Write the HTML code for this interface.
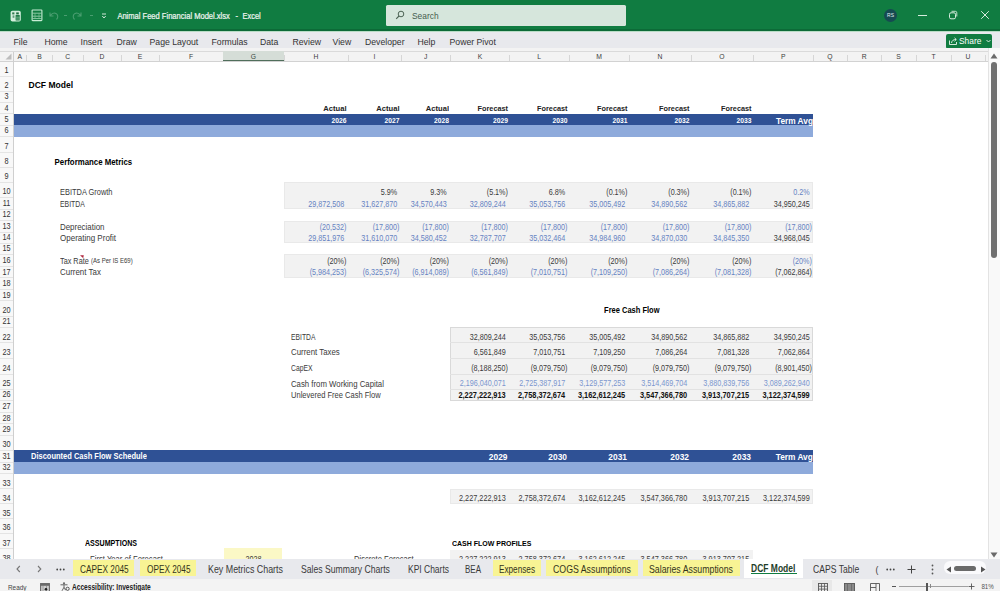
<!DOCTYPE html>
<html><head><meta charset="utf-8"><style>
*{margin:0;padding:0;box-sizing:border-box}
html,body{width:1000px;height:591px;overflow:hidden;background:#fff;font-family:"Liberation Sans", sans-serif}
.t{position:absolute;white-space:nowrap;line-height:12px;transform-origin:50% 50%}
.a{position:absolute}
</style></head><body>
<!-- title bar -->
<div class="a" style="left:0;top:0;width:1000px;height:31px;background:#107c41"></div>
<div class="a" style="left:0;top:29px;width:1000px;height:1.5px;background:#0c6a37"></div>
<svg class="a" style="left:10px;top:9.5px" width="12" height="12" viewBox="0 0 12 12">
 <rect x="0.6" y="0.8" width="10.2" height="10.8" rx="1.8" fill="#d4efdd"/>
 <rect x="2.2" y="2.4" width="2.2" height="2" fill="#2f7a4e"/>
 <rect x="6.2" y="2.4" width="2.6" height="2" fill="#1d6b3f"/>
 <rect x="2.6" y="5.4" width="1.8" height="2.4" fill="#5f9b78"/>
 <rect x="5.6" y="5" width="4.2" height="5.6" rx="0.6" fill="#1f7a47"/>
 <path d="M6 7.2H10M6 9H10" stroke="#9bd3b0" stroke-width="0.6"/>
</svg>
<svg class="a" style="left:30.5px;top:9.2px" width="12" height="12.5" viewBox="0 0 12 12.5">
 <rect x="1.1" y="1" width="9.8" height="10.6" rx="0.6" fill="none" stroke="#c8ecd5" stroke-width="1.1"/>
 <path d="M1.5 4.2H10.5M1.5 7.2H10.5M1.5 9.6H10.5" stroke="#a9dcbc" stroke-width="0.8"/>
 <path d="M4 4.2V7.2M8 4.2V7.2M4 7.2V9.6M8 7.2V9.6" stroke="#7fc49a" stroke-width="0.7"/>
</svg>
<svg class="a" style="left:47px;top:9px" width="60" height="13" viewBox="0 0 60 13">
 <path d="M3 3.5V7H6.5M3.3 6.8C4.5 4.5 7 3.5 9 4.5C11 5.5 11.5 8.5 9.5 10.5" fill="none" stroke="#4a9d70" stroke-width="1.1"/>
 <path d="M17 6.5H20" stroke="#4a9d70" stroke-width="1"/>
 <path d="M34 3.5V7H30.5M33.7 6.8C32.5 4.5 30 3.5 28 4.5C26 5.5 25.5 8.5 27.5 10.5" fill="none" stroke="#4a9d70" stroke-width="1.1"/>
 <path d="M43 6.5H46" stroke="#4a9d70" stroke-width="1"/>
 <path d="M55 5H59M55.3 7L57 9L58.7 7" fill="none" stroke="#cfe6d8" stroke-width="1"/>
</svg>
<div class="t" style="left:117.4px;top:11.2px;font-size:7.56px;color:#f0f7f2;-webkit-text-stroke:0.2px #e8f3ec;transform:scaleY(1.2)">Animal Feed Financial Model.xlsx</div>
<div class="t" style="left:235.5px;top:11.2px;font-size:7.5px;color:#f0f7f2;-webkit-text-stroke:0.2px #e8f3ec;transform:scaleY(1.2)">-</div>
<div class="t" style="left:242.6px;top:11.2px;font-size:7.4px;color:#f0f7f2;-webkit-text-stroke:0.2px #e8f3ec;transform:scaleY(1.2)">Excel</div>
<div class="a" style="left:385.5px;top:5px;width:240px;height:20.5px;background:#d6e6dc;border-radius:1.5px"></div>
<svg class="a" style="left:395px;top:10px" width="10" height="10" viewBox="0 0 10 10">
 <circle cx="6" cy="4" r="2.8" fill="none" stroke="#4d6354" stroke-width="1"/>
 <path d="M4 6L1.2 8.8" stroke="#4d6354" stroke-width="1.1"/>
</svg>
<div class="t" style="left:412px;top:9.5px;font-size:8.4px;color:#455d4e;transform:scaleY(1.12)">Search</div>
<div class="a" style="left:883.5px;top:8.5px;width:13.5px;height:13.5px;border-radius:50%;background:#164a52"></div>
<div class="t" style="left:884.5px;width:12px;text-align:center;top:9.3px;font-size:5px;color:#e0eef0">RS</div>
<div class="a" style="left:917.5px;top:14.6px;width:9px;height:1.1px;background:#d6ecdd"></div>
<svg class="a" style="left:948px;top:10px" width="10" height="10" viewBox="0 0 10 10">
 <rect x="1.5" y="2.8" width="6" height="6" rx="1.5" fill="none" stroke="#d6ecdd" stroke-width="1"/>
 <path d="M3.5 1.3H7.3Q8.8 1.3 8.8 2.8V6.5" fill="none" stroke="#d6ecdd" stroke-width="0.9"/>
</svg>
<svg class="a" style="left:980px;top:10px" width="10" height="10" viewBox="0 0 10 10">
 <path d="M1.2 1.2L8.8 8.8M8.8 1.2L1.2 8.8" stroke="#d6ecdd" stroke-width="1"/>
</svg>

<!-- ribbon tabs -->
<div class="a" style="left:0;top:31px;width:1000px;height:17px;background:#e8e9ed"></div>
<div class="a" style="left:0;top:30.5px;width:1000px;height:1px;background:#b9dcc6"></div>
<div class="t" style="left:13.5px;top:35.8px;font-size:8.7px;color:#333;transform:scaleY(1.12)">File</div>
<div class="t" style="left:44.5px;top:35.8px;font-size:8.7px;color:#333;transform:scaleY(1.12)">Home</div>
<div class="t" style="left:80.5px;top:35.8px;font-size:8.7px;color:#333;transform:scaleY(1.12)">Insert</div>
<div class="t" style="left:116.5px;top:35.8px;font-size:8.7px;color:#333;transform:scaleY(1.12)">Draw</div>
<div class="t" style="left:149.5px;top:35.8px;font-size:8.7px;color:#333;transform:scaleY(1.12)">Page Layout</div>
<div class="t" style="left:211.5px;top:35.8px;font-size:8.7px;color:#333;transform:scaleY(1.12)">Formulas</div>
<div class="t" style="left:260px;top:35.8px;font-size:8.7px;color:#333;transform:scaleY(1.12)">Data</div>
<div class="t" style="left:292.5px;top:35.8px;font-size:8.7px;color:#333;transform:scaleY(1.12)">Review</div>
<div class="t" style="left:332.5px;top:35.8px;font-size:8.7px;color:#333;transform:scaleY(1.12)">View</div>
<div class="t" style="left:365px;top:35.8px;font-size:8.7px;color:#333;transform:scaleY(1.12)">Developer</div>
<div class="t" style="left:417.5px;top:35.8px;font-size:8.7px;color:#333;transform:scaleY(1.12)">Help</div>
<div class="t" style="left:449.5px;top:35.8px;font-size:8.7px;color:#333;transform:scaleY(1.12)">Power Pivot</div>
<div class="a" style="left:946px;top:33.6px;width:46.3px;height:15.2px;background:#107c41;border-radius:2px"></div>
<svg class="a" style="left:948px;top:36px" width="10" height="10" viewBox="0 0 10 10">
 <path d="M1.5 4.5V8.5H8.5V6" fill="none" stroke="#e8f5ec" stroke-width="0.9"/>
 <path d="M3.5 7C3.8 4.5 5.5 3.5 8 3.5M6.5 1.8L8.3 3.5L6.5 5.2" fill="none" stroke="#e8f5ec" stroke-width="0.9"/>
</svg>
<div class="t" style="left:959px;top:34.8px;font-size:8.4px;color:#fff;transform:scaleY(1.12)">Share</div>
<svg class="a" style="left:985.5px;top:39px" width="5" height="4" viewBox="0 0 5 4"><path d="M0.5 1L2.5 3L4.5 1" fill="none" stroke="#e8f5ec" stroke-width="0.9"/></svg>

<!-- column header -->
<div class="a" style="left:0;top:48px;width:988px;height:14px;background:#f3f3f3"></div>
<div class="a" style="left:0;top:51.2px;width:988px;height:1px;background:#dadada"></div>
<div class="a" style="left:0;top:60.7px;width:988px;height:1px;background:#d2d2d2"></div>
<div style="position:absolute;left:13.00px;top:50.7px;width:13.50px;height:10.3px;background:transparent"></div>
<div style="position:absolute;left:26.00px;top:55px;width:1px;height:6px;background:#d6d6d6"></div>
<div class="t" style="left:13.00px;width:13.50px;text-align:center;top:50.8px;font-size:6.8px;color:#3c3c3c;transform:scaleY(1.12)">A</div>
<div style="position:absolute;left:26.50px;top:50.7px;width:26.00px;height:10.3px;background:transparent"></div>
<div style="position:absolute;left:52.00px;top:55px;width:1px;height:6px;background:#d6d6d6"></div>
<div class="t" style="left:26.50px;width:26.00px;text-align:center;top:50.8px;font-size:6.8px;color:#3c3c3c;transform:scaleY(1.12)">B</div>
<div style="position:absolute;left:52.50px;top:50.7px;width:30.50px;height:10.3px;background:transparent"></div>
<div style="position:absolute;left:82.50px;top:55px;width:1px;height:6px;background:#d6d6d6"></div>
<div class="t" style="left:52.50px;width:30.50px;text-align:center;top:50.8px;font-size:6.8px;color:#3c3c3c;transform:scaleY(1.12)">C</div>
<div style="position:absolute;left:83.00px;top:50.7px;width:38.00px;height:10.3px;background:transparent"></div>
<div style="position:absolute;left:120.50px;top:55px;width:1px;height:6px;background:#d6d6d6"></div>
<div class="t" style="left:83.00px;width:38.00px;text-align:center;top:50.8px;font-size:6.8px;color:#3c3c3c;transform:scaleY(1.12)">D</div>
<div style="position:absolute;left:121.00px;top:50.7px;width:38.00px;height:10.3px;background:transparent"></div>
<div style="position:absolute;left:158.50px;top:55px;width:1px;height:6px;background:#d6d6d6"></div>
<div class="t" style="left:121.00px;width:38.00px;text-align:center;top:50.8px;font-size:6.8px;color:#3c3c3c;transform:scaleY(1.12)">E</div>
<div style="position:absolute;left:159.00px;top:50.7px;width:64.00px;height:10.3px;background:transparent"></div>
<div style="position:absolute;left:222.50px;top:55px;width:1px;height:6px;background:#d6d6d6"></div>
<div class="t" style="left:159.00px;width:64.00px;text-align:center;top:50.8px;font-size:6.8px;color:#3c3c3c;transform:scaleY(1.12)">F</div>
<div style="position:absolute;left:223.00px;top:50.7px;width:61.00px;height:10.3px;background:#d5ddd7"></div>
<div style="position:absolute;left:283.50px;top:55px;width:1px;height:6px;background:#d6d6d6"></div>
<div class="t" style="left:223.00px;width:61.00px;text-align:center;top:50.8px;font-size:6.8px;color:#3a4a40;transform:scaleY(1.12)">G</div>
<div style="position:absolute;left:284.00px;top:50.7px;width:64.00px;height:10.3px;background:transparent"></div>
<div style="position:absolute;left:347.50px;top:55px;width:1px;height:6px;background:#d6d6d6"></div>
<div class="t" style="left:284.00px;width:64.00px;text-align:center;top:50.8px;font-size:6.8px;color:#3c3c3c;transform:scaleY(1.12)">H</div>
<div style="position:absolute;left:348.00px;top:50.7px;width:53.00px;height:10.3px;background:transparent"></div>
<div style="position:absolute;left:400.50px;top:55px;width:1px;height:6px;background:#d6d6d6"></div>
<div class="t" style="left:348.00px;width:53.00px;text-align:center;top:50.8px;font-size:6.8px;color:#3c3c3c;transform:scaleY(1.12)">I</div>
<div style="position:absolute;left:401.00px;top:50.7px;width:49.50px;height:10.3px;background:transparent"></div>
<div style="position:absolute;left:450.00px;top:55px;width:1px;height:6px;background:#d6d6d6"></div>
<div class="t" style="left:401.00px;width:49.50px;text-align:center;top:50.8px;font-size:6.8px;color:#3c3c3c;transform:scaleY(1.12)">J</div>
<div style="position:absolute;left:450.50px;top:50.7px;width:59.00px;height:10.3px;background:transparent"></div>
<div style="position:absolute;left:509.00px;top:55px;width:1px;height:6px;background:#d6d6d6"></div>
<div class="t" style="left:450.50px;width:59.00px;text-align:center;top:50.8px;font-size:6.8px;color:#3c3c3c;transform:scaleY(1.12)">K</div>
<div style="position:absolute;left:509.50px;top:50.7px;width:59.50px;height:10.3px;background:transparent"></div>
<div style="position:absolute;left:568.50px;top:55px;width:1px;height:6px;background:#d6d6d6"></div>
<div class="t" style="left:509.50px;width:59.50px;text-align:center;top:50.8px;font-size:6.8px;color:#3c3c3c;transform:scaleY(1.12)">L</div>
<div style="position:absolute;left:569.00px;top:50.7px;width:60.00px;height:10.3px;background:transparent"></div>
<div style="position:absolute;left:628.50px;top:55px;width:1px;height:6px;background:#d6d6d6"></div>
<div class="t" style="left:569.00px;width:60.00px;text-align:center;top:50.8px;font-size:6.8px;color:#3c3c3c;transform:scaleY(1.12)">M</div>
<div style="position:absolute;left:629.00px;top:50.7px;width:62.00px;height:10.3px;background:transparent"></div>
<div style="position:absolute;left:690.50px;top:55px;width:1px;height:6px;background:#d6d6d6"></div>
<div class="t" style="left:629.00px;width:62.00px;text-align:center;top:50.8px;font-size:6.8px;color:#3c3c3c;transform:scaleY(1.12)">N</div>
<div style="position:absolute;left:691.00px;top:50.7px;width:62.00px;height:10.3px;background:transparent"></div>
<div style="position:absolute;left:752.50px;top:55px;width:1px;height:6px;background:#d6d6d6"></div>
<div class="t" style="left:691.00px;width:62.00px;text-align:center;top:50.8px;font-size:6.8px;color:#3c3c3c;transform:scaleY(1.12)">O</div>
<div style="position:absolute;left:753.00px;top:50.7px;width:60.50px;height:10.3px;background:transparent"></div>
<div style="position:absolute;left:813.00px;top:55px;width:1px;height:6px;background:#d6d6d6"></div>
<div class="t" style="left:753.00px;width:60.50px;text-align:center;top:50.8px;font-size:6.8px;color:#3c3c3c;transform:scaleY(1.12)">P</div>
<div style="position:absolute;left:812.50px;top:50.7px;width:35.00px;height:10.3px;background:transparent"></div>
<div style="position:absolute;left:847.00px;top:55px;width:1px;height:6px;background:#d6d6d6"></div>
<div class="t" style="left:812.50px;width:35.00px;text-align:center;top:50.8px;font-size:6.8px;color:#3c3c3c;transform:scaleY(1.12)">Q</div>
<div style="position:absolute;left:847.50px;top:50.7px;width:33.50px;height:10.3px;background:transparent"></div>
<div style="position:absolute;left:880.50px;top:55px;width:1px;height:6px;background:#d6d6d6"></div>
<div class="t" style="left:847.50px;width:33.50px;text-align:center;top:50.8px;font-size:6.8px;color:#3c3c3c;transform:scaleY(1.12)">R</div>
<div style="position:absolute;left:881.00px;top:50.7px;width:35.00px;height:10.3px;background:transparent"></div>
<div style="position:absolute;left:915.50px;top:55px;width:1px;height:6px;background:#d6d6d6"></div>
<div class="t" style="left:881.00px;width:35.00px;text-align:center;top:50.8px;font-size:6.8px;color:#3c3c3c;transform:scaleY(1.12)">S</div>
<div style="position:absolute;left:916.00px;top:50.7px;width:35.00px;height:10.3px;background:transparent"></div>
<div style="position:absolute;left:950.50px;top:55px;width:1px;height:6px;background:#d6d6d6"></div>
<div class="t" style="left:916.00px;width:35.00px;text-align:center;top:50.8px;font-size:6.8px;color:#3c3c3c;transform:scaleY(1.12)">T</div>
<div style="position:absolute;left:951.00px;top:50.7px;width:34.00px;height:10.3px;background:transparent"></div>
<div style="position:absolute;left:984.50px;top:55px;width:1px;height:6px;background:#d6d6d6"></div>
<div class="t" style="left:951.00px;width:34.00px;text-align:center;top:50.8px;font-size:6.8px;color:#3c3c3c;transform:scaleY(1.12)">U</div>
<div style="position:absolute;left:223px;top:60px;width:61px;height:1.3px;background:#506e5b"></div>
<svg class="a" style="left:5px;top:53px" width="7" height="7" viewBox="0 0 7 7"><path d="M6.5 0.5V6.5H0.5Z" fill="#bdbdbd"/></svg>

<!-- row header -->
<div class="a" style="left:0;top:61.6px;width:13px;height:498px;background:#f8f8f8"></div>
<div class="a" style="left:12.8px;top:52px;width:1px;height:507px;background:#cfcfcf"></div>
<div style="position:absolute;left:0;top:75.80px;width:13px;height:1px;background:#e4e4e4"></div>
<div class="t" style="left:0;width:13px;text-align:center;top:65.10px;font-size:7.3px;color:#333;transform:scaleY(1.2)">1</div>
<div style="position:absolute;left:0;top:90.50px;width:13px;height:1px;background:#e4e4e4"></div>
<div class="t" style="left:0;width:13px;text-align:center;top:79.80px;font-size:7.3px;color:#333;transform:scaleY(1.2)">2</div>
<div style="position:absolute;left:0;top:101.70px;width:13px;height:1px;background:#e4e4e4"></div>
<div class="t" style="left:0;width:13px;text-align:center;top:91.00px;font-size:7.3px;color:#333;transform:scaleY(1.2)">3</div>
<div style="position:absolute;left:0;top:113.30px;width:13px;height:1px;background:#e4e4e4"></div>
<div class="t" style="left:0;width:13px;text-align:center;top:102.60px;font-size:7.3px;color:#333;transform:scaleY(1.2)">4</div>
<div style="position:absolute;left:0;top:124.50px;width:13px;height:1px;background:#e4e4e4"></div>
<div class="t" style="left:0;width:13px;text-align:center;top:113.80px;font-size:7.3px;color:#333;transform:scaleY(1.2)">5</div>
<div style="position:absolute;left:0;top:136.10px;width:13px;height:1px;background:#e4e4e4"></div>
<div class="t" style="left:0;width:13px;text-align:center;top:125.40px;font-size:7.3px;color:#333;transform:scaleY(1.2)">6</div>
<div style="position:absolute;left:0;top:151.60px;width:13px;height:1px;background:#e4e4e4"></div>
<div class="t" style="left:0;width:13px;text-align:center;top:140.90px;font-size:7.3px;color:#333;transform:scaleY(1.2)">7</div>
<div style="position:absolute;left:0;top:166.90px;width:13px;height:1px;background:#e4e4e4"></div>
<div class="t" style="left:0;width:13px;text-align:center;top:156.20px;font-size:7.3px;color:#333;transform:scaleY(1.2)">8</div>
<div style="position:absolute;left:0;top:181.70px;width:13px;height:1px;background:#e4e4e4"></div>
<div class="t" style="left:0;width:13px;text-align:center;top:171.00px;font-size:7.3px;color:#333;transform:scaleY(1.2)">9</div>
<div style="position:absolute;left:0;top:196.80px;width:13px;height:1px;background:#e4e4e4"></div>
<div class="t" style="left:0;width:13px;text-align:center;top:186.10px;font-size:7.3px;color:#333;transform:scaleY(1.2)">10</div>
<div style="position:absolute;left:0;top:208.50px;width:13px;height:1px;background:#e4e4e4"></div>
<div class="t" style="left:0;width:13px;text-align:center;top:197.80px;font-size:7.3px;color:#333;transform:scaleY(1.2)">11</div>
<div style="position:absolute;left:0;top:220.10px;width:13px;height:1px;background:#e4e4e4"></div>
<div class="t" style="left:0;width:13px;text-align:center;top:209.40px;font-size:7.3px;color:#333;transform:scaleY(1.2)">12</div>
<div style="position:absolute;left:0;top:231.50px;width:13px;height:1px;background:#e4e4e4"></div>
<div class="t" style="left:0;width:13px;text-align:center;top:220.80px;font-size:7.3px;color:#333;transform:scaleY(1.2)">13</div>
<div style="position:absolute;left:0;top:242.50px;width:13px;height:1px;background:#e4e4e4"></div>
<div class="t" style="left:0;width:13px;text-align:center;top:231.80px;font-size:7.3px;color:#333;transform:scaleY(1.2)">14</div>
<div style="position:absolute;left:0;top:253.90px;width:13px;height:1px;background:#e4e4e4"></div>
<div class="t" style="left:0;width:13px;text-align:center;top:243.20px;font-size:7.3px;color:#333;transform:scaleY(1.2)">15</div>
<div style="position:absolute;left:0;top:265.50px;width:13px;height:1px;background:#e4e4e4"></div>
<div class="t" style="left:0;width:13px;text-align:center;top:254.80px;font-size:7.3px;color:#333;transform:scaleY(1.2)">16</div>
<div style="position:absolute;left:0;top:277.20px;width:13px;height:1px;background:#e4e4e4"></div>
<div class="t" style="left:0;width:13px;text-align:center;top:266.50px;font-size:7.3px;color:#333;transform:scaleY(1.2)">17</div>
<div style="position:absolute;left:0;top:288.60px;width:13px;height:1px;background:#e4e4e4"></div>
<div class="t" style="left:0;width:13px;text-align:center;top:277.90px;font-size:7.3px;color:#333;transform:scaleY(1.2)">18</div>
<div style="position:absolute;left:0;top:300.30px;width:13px;height:1px;background:#e4e4e4"></div>
<div class="t" style="left:0;width:13px;text-align:center;top:289.60px;font-size:7.3px;color:#333;transform:scaleY(1.2)">19</div>
<div style="position:absolute;left:0;top:315.50px;width:13px;height:1px;background:#e4e4e4"></div>
<div class="t" style="left:0;width:13px;text-align:center;top:304.80px;font-size:7.3px;color:#333;transform:scaleY(1.2)">20</div>
<div style="position:absolute;left:0;top:327.10px;width:13px;height:1px;background:#e4e4e4"></div>
<div class="t" style="left:0;width:13px;text-align:center;top:316.40px;font-size:7.3px;color:#333;transform:scaleY(1.2)">21</div>
<div style="position:absolute;left:0;top:342.40px;width:13px;height:1px;background:#e4e4e4"></div>
<div class="t" style="left:0;width:13px;text-align:center;top:331.70px;font-size:7.3px;color:#333;transform:scaleY(1.2)">22</div>
<div style="position:absolute;left:0;top:357.50px;width:13px;height:1px;background:#e4e4e4"></div>
<div class="t" style="left:0;width:13px;text-align:center;top:346.80px;font-size:7.3px;color:#333;transform:scaleY(1.2)">23</div>
<div style="position:absolute;left:0;top:373.50px;width:13px;height:1px;background:#e4e4e4"></div>
<div class="t" style="left:0;width:13px;text-align:center;top:362.80px;font-size:7.3px;color:#333;transform:scaleY(1.2)">24</div>
<div style="position:absolute;left:0;top:388.70px;width:13px;height:1px;background:#e4e4e4"></div>
<div class="t" style="left:0;width:13px;text-align:center;top:378.00px;font-size:7.3px;color:#333;transform:scaleY(1.2)">25</div>
<div style="position:absolute;left:0;top:400.00px;width:13px;height:1px;background:#e4e4e4"></div>
<div class="t" style="left:0;width:13px;text-align:center;top:389.30px;font-size:7.3px;color:#333;transform:scaleY(1.2)">26</div>
<div style="position:absolute;left:0;top:411.50px;width:13px;height:1px;background:#e4e4e4"></div>
<div class="t" style="left:0;width:13px;text-align:center;top:400.80px;font-size:7.3px;color:#333;transform:scaleY(1.2)">27</div>
<div style="position:absolute;left:0;top:423.20px;width:13px;height:1px;background:#e4e4e4"></div>
<div class="t" style="left:0;width:13px;text-align:center;top:412.50px;font-size:7.3px;color:#333;transform:scaleY(1.2)">28</div>
<div style="position:absolute;left:0;top:434.50px;width:13px;height:1px;background:#e4e4e4"></div>
<div class="t" style="left:0;width:13px;text-align:center;top:423.80px;font-size:7.3px;color:#333;transform:scaleY(1.2)">29</div>
<div style="position:absolute;left:0;top:449.70px;width:13px;height:1px;background:#e4e4e4"></div>
<div class="t" style="left:0;width:13px;text-align:center;top:439.00px;font-size:7.3px;color:#333;transform:scaleY(1.2)">30</div>
<div style="position:absolute;left:0;top:461.50px;width:13px;height:1px;background:#e4e4e4"></div>
<div class="t" style="left:0;width:13px;text-align:center;top:450.80px;font-size:7.3px;color:#333;transform:scaleY(1.2)">31</div>
<div style="position:absolute;left:0;top:473.10px;width:13px;height:1px;background:#e4e4e4"></div>
<div class="t" style="left:0;width:13px;text-align:center;top:462.40px;font-size:7.3px;color:#333;transform:scaleY(1.2)">32</div>
<div style="position:absolute;left:0;top:488.20px;width:13px;height:1px;background:#e4e4e4"></div>
<div class="t" style="left:0;width:13px;text-align:center;top:477.50px;font-size:7.3px;color:#333;transform:scaleY(1.2)">33</div>
<div style="position:absolute;left:0;top:503.30px;width:13px;height:1px;background:#e4e4e4"></div>
<div class="t" style="left:0;width:13px;text-align:center;top:492.60px;font-size:7.3px;color:#333;transform:scaleY(1.2)">34</div>
<div style="position:absolute;left:0;top:518.20px;width:13px;height:1px;background:#e4e4e4"></div>
<div class="t" style="left:0;width:13px;text-align:center;top:507.50px;font-size:7.3px;color:#333;transform:scaleY(1.2)">35</div>
<div style="position:absolute;left:0;top:533.00px;width:13px;height:1px;background:#e4e4e4"></div>
<div class="t" style="left:0;width:13px;text-align:center;top:522.30px;font-size:7.3px;color:#333;transform:scaleY(1.2)">36</div>
<div style="position:absolute;left:0;top:548.30px;width:13px;height:1px;background:#e4e4e4"></div>
<div class="t" style="left:0;width:13px;text-align:center;top:537.60px;font-size:7.3px;color:#333;transform:scaleY(1.2)">37</div>
<div style="position:absolute;left:0;top:563.50px;width:13px;height:1px;background:#e4e4e4"></div>
<div class="t" style="left:0;width:13px;text-align:center;top:552.80px;font-size:7.3px;color:#333;transform:scaleY(1.2)">38</div>

<!-- grid -->
<div class="a" style="left:13.5px;top:61.7px;width:974px;height:497.3px;background:#fff"></div>
<div style="position:absolute;left:13.50px;top:113.80px;width:799.70px;height:11.20px;background:#2f5195"></div>
<div style="position:absolute;left:13.50px;top:125.00px;width:799.70px;height:11.60px;background:#8eaadb"></div>
<div style="position:absolute;left:13.50px;top:450.20px;width:799.70px;height:11.80px;background:#2f5195"></div>
<div style="position:absolute;left:13.50px;top:462.00px;width:799.70px;height:11.60px;background:#8eaadb"></div>
<div style="position:absolute;left:283.50px;top:182.20px;width:529.80px;height:26.80px;background:#f2f2f2;border:1px solid #e9e9e9"></div>
<div style="position:absolute;left:283.50px;top:220.60px;width:529.80px;height:22.40px;background:#f2f2f2;border:1px solid #e9e9e9"></div>
<div style="position:absolute;left:283.50px;top:254.40px;width:529.80px;height:23.30px;background:#f2f2f2;border:1px solid #e9e9e9"></div>
<div style="position:absolute;left:449.50px;top:327.00px;width:363.50px;height:73.50px;background:#f2f2f2;border:1px solid #d9d9d9;box-sizing:border-box"></div>
<div style="position:absolute;left:449.50px;top:342.40px;width:363.50px;height:1.00px;background:#e2e2e2"></div>
<div style="position:absolute;left:449.50px;top:357.50px;width:363.50px;height:1.00px;background:#e2e2e2"></div>
<div style="position:absolute;left:449.50px;top:373.50px;width:363.50px;height:1.00px;background:#e2e2e2"></div>
<div style="position:absolute;left:449.50px;top:388.70px;width:363.50px;height:1.00px;background:#e2e2e2"></div>
<div style="position:absolute;left:284.00px;top:488.70px;width:528.50px;height:15.10px;"></div>
<div style="position:absolute;left:449.50px;top:488.70px;width:363.80px;height:15.10px;background:#f2f2f2;border:1px solid #e9e9e9"></div>
<div style="position:absolute;left:449.80px;top:549.80px;width:302.90px;height:15.20px;background:#f2f2f2"></div>
<div style="position:absolute;left:223.80px;top:547.60px;width:58.40px;height:17.40px;background:#fbf8c6"></div>
<div class="t" style="left:28.50px;top:79.20px;font-size:8.55px;font-weight:700;color:#000;transform:scale(1.0000,1.15);transform-origin:0 50%;">DCF Model</div>
<div class="t" style="right:653.50px;top:103.40px;font-size:7.6px;font-weight:700;color:#222;transform:scale(1.0000,1.05);transform-origin:100% 50%;">Actual</div>
<div class="t" style="right:600.50px;top:103.40px;font-size:7.6px;font-weight:700;color:#222;transform:scale(1.0000,1.05);transform-origin:100% 50%;">Actual</div>
<div class="t" style="right:551.00px;top:103.40px;font-size:7.6px;font-weight:700;color:#222;transform:scale(1.0000,1.05);transform-origin:100% 50%;">Actual</div>
<div class="t" style="right:492.00px;top:103.40px;font-size:7.3px;font-weight:700;color:#222;transform:scale(1.0000,1.05);transform-origin:100% 50%;">Forecast</div>
<div class="t" style="right:432.50px;top:103.40px;font-size:7.3px;font-weight:700;color:#222;transform:scale(1.0000,1.05);transform-origin:100% 50%;">Forecast</div>
<div class="t" style="right:372.50px;top:103.40px;font-size:7.3px;font-weight:700;color:#222;transform:scale(1.0000,1.05);transform-origin:100% 50%;">Forecast</div>
<div class="t" style="right:310.50px;top:103.40px;font-size:7.3px;font-weight:700;color:#222;transform:scale(1.0000,1.05);transform-origin:100% 50%;">Forecast</div>
<div class="t" style="right:248.50px;top:103.40px;font-size:7.3px;font-weight:700;color:#222;transform:scale(1.0000,1.05);transform-origin:100% 50%;">Forecast</div>
<div class="t" style="right:653.50px;top:115.20px;font-size:6.7px;font-weight:700;color:#fff;transform:scale(1.0000,1.15);transform-origin:100% 50%;">2026</div>
<div class="t" style="right:600.50px;top:115.20px;font-size:6.7px;font-weight:700;color:#fff;transform:scale(1.0000,1.15);transform-origin:100% 50%;">2027</div>
<div class="t" style="right:551.00px;top:115.20px;font-size:6.7px;font-weight:700;color:#fff;transform:scale(1.0000,1.15);transform-origin:100% 50%;">2028</div>
<div class="t" style="right:492.00px;top:115.20px;font-size:6.7px;font-weight:700;color:#fff;transform:scale(1.0000,1.15);transform-origin:100% 50%;">2029</div>
<div class="t" style="right:432.50px;top:115.20px;font-size:6.7px;font-weight:700;color:#fff;transform:scale(1.0000,1.15);transform-origin:100% 50%;">2030</div>
<div class="t" style="right:372.50px;top:115.20px;font-size:6.7px;font-weight:700;color:#fff;transform:scale(1.0000,1.15);transform-origin:100% 50%;">2031</div>
<div class="t" style="right:310.50px;top:115.20px;font-size:6.7px;font-weight:700;color:#fff;transform:scale(1.0000,1.15);transform-origin:100% 50%;">2032</div>
<div class="t" style="right:248.50px;top:115.20px;font-size:6.7px;font-weight:700;color:#fff;transform:scale(1.0000,1.15);transform-origin:100% 50%;">2033</div>
<div class="t" style="right:187.00px;top:114.60px;font-size:8.3px;font-weight:700;color:#fff;transform:scale(1.0000,1.15);transform-origin:100% 50%;">Term Avg</div>
<div class="t" style="left:54.60px;top:156.50px;font-size:7.85px;font-weight:700;color:#000;transform:scale(1.0000,1.15);transform-origin:0 50%;">Performance Metrics</div>
<div class="t" style="left:59.50px;top:186.90px;font-size:7.6px;font-weight:400;color:#3a3a3a;transform:scale(0.9788,1.15);transform-origin:0 50%;">EBITDA Growth</div>
<div class="t" style="left:59.50px;top:198.60px;font-size:7.6px;font-weight:400;color:#3a3a3a;transform:scale(0.9035,1.15);transform-origin:0 50%;">EBITDA</div>
<div class="t" style="left:59.50px;top:221.60px;font-size:7.6px;font-weight:400;color:#3a3a3a;transform:scale(1.0429,1.15);transform-origin:0 50%;">Depreciation</div>
<div class="t" style="left:59.50px;top:232.60px;font-size:7.6px;font-weight:400;color:#3a3a3a;transform:scale(1.0540,1.15);transform-origin:0 50%;">Operating Profit</div>
<div class="t" style="left:59.50px;top:267.30px;font-size:7.6px;font-weight:400;color:#3a3a3a;transform:scale(1.0449,1.15);transform-origin:0 50%;">Current Tax</div>
<div class="t" style="left:59.80px;top:255.60px;font-size:7.6px;font-weight:400;color:#3a3a3a;transform:scale(0.9603,1.15);transform-origin:0 50%;">Tax Rate</div>
<div class="t" style="left:91.10px;top:255.40px;font-size:6.5px;font-weight:400;color:#3a3a3a;transform:scale(0.9235,1.15);transform-origin:0 50%;">(As Per IS E69)</div>
<div class="t" style="right:602.80px;top:186.90px;font-size:7.2px;font-weight:400;color:#3a3a3a;transform:scale(1.0000,1.15);transform-origin:100% 50%;">5.9%</div>
<div class="t" style="right:553.30px;top:186.90px;font-size:7.2px;font-weight:400;color:#3a3a3a;transform:scale(1.0000,1.15);transform-origin:100% 50%;">9.3%</div>
<div class="t" style="right:492.10px;top:186.90px;font-size:7.2px;font-weight:400;color:#3a3a3a;transform:scale(1.0000,1.15);transform-origin:100% 50%;">(5.1%)</div>
<div class="t" style="right:434.80px;top:186.90px;font-size:7.2px;font-weight:400;color:#3a3a3a;transform:scale(1.0000,1.15);transform-origin:100% 50%;">6.8%</div>
<div class="t" style="right:372.60px;top:186.90px;font-size:7.2px;font-weight:400;color:#3a3a3a;transform:scale(1.0000,1.15);transform-origin:100% 50%;">(0.1%)</div>
<div class="t" style="right:310.60px;top:186.90px;font-size:7.2px;font-weight:400;color:#3a3a3a;transform:scale(1.0000,1.15);transform-origin:100% 50%;">(0.3%)</div>
<div class="t" style="right:248.60px;top:186.90px;font-size:7.2px;font-weight:400;color:#3a3a3a;transform:scale(1.0000,1.15);transform-origin:100% 50%;">(0.1%)</div>
<div class="t" style="right:190.30px;top:186.90px;font-size:7.2px;font-weight:400;color:#6682c2;transform:scale(1.0000,1.15);transform-origin:100% 50%;">0.2%</div>
<div class="t" style="right:655.80px;top:198.60px;font-size:7.2px;font-weight:400;color:#6682c2;transform:scale(1.0000,1.15);transform-origin:100% 50%;">29,872,508</div>
<div class="t" style="right:602.80px;top:198.60px;font-size:7.2px;font-weight:400;color:#6682c2;transform:scale(1.0000,1.15);transform-origin:100% 50%;">31,627,870</div>
<div class="t" style="right:553.30px;top:198.60px;font-size:7.2px;font-weight:400;color:#6682c2;transform:scale(1.0000,1.15);transform-origin:100% 50%;">34,570,443</div>
<div class="t" style="right:494.30px;top:198.60px;font-size:7.2px;font-weight:400;color:#6682c2;transform:scale(1.0000,1.15);transform-origin:100% 50%;">32,809,244</div>
<div class="t" style="right:434.80px;top:198.60px;font-size:7.2px;font-weight:400;color:#6682c2;transform:scale(1.0000,1.15);transform-origin:100% 50%;">35,053,756</div>
<div class="t" style="right:374.80px;top:198.60px;font-size:7.2px;font-weight:400;color:#6682c2;transform:scale(1.0000,1.15);transform-origin:100% 50%;">35,005,492</div>
<div class="t" style="right:312.80px;top:198.60px;font-size:7.2px;font-weight:400;color:#6682c2;transform:scale(1.0000,1.15);transform-origin:100% 50%;">34,890,562</div>
<div class="t" style="right:250.80px;top:198.60px;font-size:7.2px;font-weight:400;color:#6682c2;transform:scale(1.0000,1.15);transform-origin:100% 50%;">34,865,882</div>
<div class="t" style="right:190.30px;top:198.60px;font-size:7.2px;font-weight:400;color:#3a3a3a;transform:scale(1.0000,1.15);transform-origin:100% 50%;">34,950,245</div>
<div class="t" style="right:653.60px;top:221.60px;font-size:7.2px;font-weight:400;color:#6682c2;transform:scale(1.0000,1.15);transform-origin:100% 50%;">(20,532)</div>
<div class="t" style="right:600.60px;top:221.60px;font-size:7.2px;font-weight:400;color:#6682c2;transform:scale(1.0000,1.15);transform-origin:100% 50%;">(17,800)</div>
<div class="t" style="right:551.10px;top:221.60px;font-size:7.2px;font-weight:400;color:#6682c2;transform:scale(1.0000,1.15);transform-origin:100% 50%;">(17,800)</div>
<div class="t" style="right:492.10px;top:221.60px;font-size:7.2px;font-weight:400;color:#6682c2;transform:scale(1.0000,1.15);transform-origin:100% 50%;">(17,800)</div>
<div class="t" style="right:432.60px;top:221.60px;font-size:7.2px;font-weight:400;color:#6682c2;transform:scale(1.0000,1.15);transform-origin:100% 50%;">(17,800)</div>
<div class="t" style="right:372.60px;top:221.60px;font-size:7.2px;font-weight:400;color:#6682c2;transform:scale(1.0000,1.15);transform-origin:100% 50%;">(17,800)</div>
<div class="t" style="right:310.60px;top:221.60px;font-size:7.2px;font-weight:400;color:#6682c2;transform:scale(1.0000,1.15);transform-origin:100% 50%;">(17,800)</div>
<div class="t" style="right:248.60px;top:221.60px;font-size:7.2px;font-weight:400;color:#6682c2;transform:scale(1.0000,1.15);transform-origin:100% 50%;">(17,800)</div>
<div class="t" style="right:188.10px;top:221.60px;font-size:7.2px;font-weight:400;color:#6682c2;transform:scale(1.0000,1.15);transform-origin:100% 50%;">(17,800)</div>
<div class="t" style="right:655.80px;top:232.60px;font-size:7.2px;font-weight:400;color:#6682c2;transform:scale(1.0000,1.15);transform-origin:100% 50%;">29,851,976</div>
<div class="t" style="right:602.80px;top:232.60px;font-size:7.2px;font-weight:400;color:#6682c2;transform:scale(1.0000,1.15);transform-origin:100% 50%;">31,610,070</div>
<div class="t" style="right:553.30px;top:232.60px;font-size:7.2px;font-weight:400;color:#6682c2;transform:scale(1.0000,1.15);transform-origin:100% 50%;">34,580,452</div>
<div class="t" style="right:494.30px;top:232.60px;font-size:7.2px;font-weight:400;color:#6682c2;transform:scale(1.0000,1.15);transform-origin:100% 50%;">32,787,707</div>
<div class="t" style="right:434.80px;top:232.60px;font-size:7.2px;font-weight:400;color:#6682c2;transform:scale(1.0000,1.15);transform-origin:100% 50%;">35,032,464</div>
<div class="t" style="right:374.80px;top:232.60px;font-size:7.2px;font-weight:400;color:#6682c2;transform:scale(1.0000,1.15);transform-origin:100% 50%;">34,984,960</div>
<div class="t" style="right:312.80px;top:232.60px;font-size:7.2px;font-weight:400;color:#6682c2;transform:scale(1.0000,1.15);transform-origin:100% 50%;">34,870,030</div>
<div class="t" style="right:250.80px;top:232.60px;font-size:7.2px;font-weight:400;color:#6682c2;transform:scale(1.0000,1.15);transform-origin:100% 50%;">34,845,350</div>
<div class="t" style="right:190.30px;top:232.60px;font-size:7.2px;font-weight:400;color:#3a3a3a;transform:scale(1.0000,1.15);transform-origin:100% 50%;">34,968,045</div>
<div class="t" style="right:653.60px;top:255.60px;font-size:7.2px;font-weight:400;color:#3a3a3a;transform:scale(1.0000,1.15);transform-origin:100% 50%;">(20%)</div>
<div class="t" style="right:600.60px;top:255.60px;font-size:7.2px;font-weight:400;color:#3a3a3a;transform:scale(1.0000,1.15);transform-origin:100% 50%;">(20%)</div>
<div class="t" style="right:551.10px;top:255.60px;font-size:7.2px;font-weight:400;color:#3a3a3a;transform:scale(1.0000,1.15);transform-origin:100% 50%;">(20%)</div>
<div class="t" style="right:492.10px;top:255.60px;font-size:7.2px;font-weight:400;color:#3a3a3a;transform:scale(1.0000,1.15);transform-origin:100% 50%;">(20%)</div>
<div class="t" style="right:432.60px;top:255.60px;font-size:7.2px;font-weight:400;color:#3a3a3a;transform:scale(1.0000,1.15);transform-origin:100% 50%;">(20%)</div>
<div class="t" style="right:372.60px;top:255.60px;font-size:7.2px;font-weight:400;color:#3a3a3a;transform:scale(1.0000,1.15);transform-origin:100% 50%;">(20%)</div>
<div class="t" style="right:310.60px;top:255.60px;font-size:7.2px;font-weight:400;color:#3a3a3a;transform:scale(1.0000,1.15);transform-origin:100% 50%;">(20%)</div>
<div class="t" style="right:248.60px;top:255.60px;font-size:7.2px;font-weight:400;color:#3a3a3a;transform:scale(1.0000,1.15);transform-origin:100% 50%;">(20%)</div>
<div class="t" style="right:188.10px;top:255.60px;font-size:7.2px;font-weight:400;color:#6682c2;transform:scale(1.0000,1.15);transform-origin:100% 50%;">(20%)</div>
<div class="t" style="right:653.60px;top:267.30px;font-size:7.2px;font-weight:400;color:#6682c2;transform:scale(1.0000,1.15);transform-origin:100% 50%;">(5,984,253)</div>
<div class="t" style="right:600.60px;top:267.30px;font-size:7.2px;font-weight:400;color:#6682c2;transform:scale(1.0000,1.15);transform-origin:100% 50%;">(6,325,574)</div>
<div class="t" style="right:551.10px;top:267.30px;font-size:7.2px;font-weight:400;color:#6682c2;transform:scale(1.0000,1.15);transform-origin:100% 50%;">(6,914,089)</div>
<div class="t" style="right:492.10px;top:267.30px;font-size:7.2px;font-weight:400;color:#6682c2;transform:scale(1.0000,1.15);transform-origin:100% 50%;">(6,561,849)</div>
<div class="t" style="right:432.60px;top:267.30px;font-size:7.2px;font-weight:400;color:#6682c2;transform:scale(1.0000,1.15);transform-origin:100% 50%;">(7,010,751)</div>
<div class="t" style="right:372.60px;top:267.30px;font-size:7.2px;font-weight:400;color:#6682c2;transform:scale(1.0000,1.15);transform-origin:100% 50%;">(7,109,250)</div>
<div class="t" style="right:310.60px;top:267.30px;font-size:7.2px;font-weight:400;color:#6682c2;transform:scale(1.0000,1.15);transform-origin:100% 50%;">(7,086,264)</div>
<div class="t" style="right:248.60px;top:267.30px;font-size:7.2px;font-weight:400;color:#6682c2;transform:scale(1.0000,1.15);transform-origin:100% 50%;">(7,081,328)</div>
<div class="t" style="right:188.10px;top:267.30px;font-size:7.2px;font-weight:400;color:#3a3a3a;transform:scale(1.0000,1.15);transform-origin:100% 50%;">(7,062,864)</div>
<svg style="position:absolute;left:79.6px;top:254.6px" width="4.5" height="3.5"><path d="M0 0.2H3.8L3.2 3.2Z" fill="#b0283f"/></svg>
<div class="t" style="left:431.80px;width:400px;text-align:center;top:304.70px;font-size:7.5px;font-weight:700;color:#000;transform:scale(1.0000,1.15);transform-origin:50% 50%;">Free Cash Flow</div>
<div class="t" style="left:290.60px;top:331.50px;font-size:7.6px;font-weight:400;color:#3a3a3a;transform:scale(0.8889,1.15);transform-origin:0 50%;">EBITDA</div>
<div class="t" style="left:290.60px;top:347.10px;font-size:7.6px;font-weight:400;color:#3a3a3a;transform:scale(1.0346,1.15);transform-origin:0 50%;">Current Taxes</div>
<div class="t" style="left:290.60px;top:362.80px;font-size:7.6px;font-weight:400;color:#3a3a3a;transform:scale(0.8970,1.15);transform-origin:0 50%;">CapEX</div>
<div class="t" style="left:290.60px;top:378.80px;font-size:7.6px;font-weight:400;color:#3a3a3a;transform:scale(1.0257,1.15);transform-origin:0 50%;">Cash from Working Capital</div>
<div class="t" style="left:290.60px;top:390.10px;font-size:7.6px;font-weight:400;color:#3a3a3a;transform:scale(0.9923,1.15);transform-origin:0 50%;">Unlevered Free Cash Flow</div>
<div class="t" style="right:494.30px;top:331.60px;font-size:7.2px;font-weight:400;color:#3a3a3a;transform:scale(1.0000,1.15);transform-origin:100% 50%;">32,809,244</div>
<div class="t" style="right:494.30px;top:346.70px;font-size:7.2px;font-weight:400;color:#3a3a3a;transform:scale(1.0000,1.15);transform-origin:100% 50%;">6,561,849</div>
<div class="t" style="right:492.10px;top:362.70px;font-size:7.2px;font-weight:400;color:#3a3a3a;transform:scale(1.0000,1.15);transform-origin:100% 50%;">(8,188,250)</div>
<div class="t" style="right:494.30px;top:377.90px;font-size:7.2px;font-weight:400;color:#7b96cf;transform:scale(1.0000,1.15);transform-origin:100% 50%;">2,196,040,071</div>
<div class="t" style="right:494.30px;top:390.10px;font-size:7.4px;font-weight:700;color:#111;transform:scale(1.0000,1.15);transform-origin:100% 50%;">2,227,222,913</div>
<div class="t" style="right:434.80px;top:331.60px;font-size:7.2px;font-weight:400;color:#3a3a3a;transform:scale(1.0000,1.15);transform-origin:100% 50%;">35,053,756</div>
<div class="t" style="right:434.80px;top:346.70px;font-size:7.2px;font-weight:400;color:#3a3a3a;transform:scale(1.0000,1.15);transform-origin:100% 50%;">7,010,751</div>
<div class="t" style="right:432.60px;top:362.70px;font-size:7.2px;font-weight:400;color:#3a3a3a;transform:scale(1.0000,1.15);transform-origin:100% 50%;">(9,079,750)</div>
<div class="t" style="right:434.80px;top:377.90px;font-size:7.2px;font-weight:400;color:#7b96cf;transform:scale(1.0000,1.15);transform-origin:100% 50%;">2,725,387,917</div>
<div class="t" style="right:434.80px;top:390.10px;font-size:7.4px;font-weight:700;color:#111;transform:scale(1.0000,1.15);transform-origin:100% 50%;">2,758,372,674</div>
<div class="t" style="right:374.80px;top:331.60px;font-size:7.2px;font-weight:400;color:#3a3a3a;transform:scale(1.0000,1.15);transform-origin:100% 50%;">35,005,492</div>
<div class="t" style="right:374.80px;top:346.70px;font-size:7.2px;font-weight:400;color:#3a3a3a;transform:scale(1.0000,1.15);transform-origin:100% 50%;">7,109,250</div>
<div class="t" style="right:372.60px;top:362.70px;font-size:7.2px;font-weight:400;color:#3a3a3a;transform:scale(1.0000,1.15);transform-origin:100% 50%;">(9,079,750)</div>
<div class="t" style="right:374.80px;top:377.90px;font-size:7.2px;font-weight:400;color:#7b96cf;transform:scale(1.0000,1.15);transform-origin:100% 50%;">3,129,577,253</div>
<div class="t" style="right:374.80px;top:390.10px;font-size:7.4px;font-weight:700;color:#111;transform:scale(1.0000,1.15);transform-origin:100% 50%;">3,162,612,245</div>
<div class="t" style="right:312.80px;top:331.60px;font-size:7.2px;font-weight:400;color:#3a3a3a;transform:scale(1.0000,1.15);transform-origin:100% 50%;">34,890,562</div>
<div class="t" style="right:312.80px;top:346.70px;font-size:7.2px;font-weight:400;color:#3a3a3a;transform:scale(1.0000,1.15);transform-origin:100% 50%;">7,086,264</div>
<div class="t" style="right:310.60px;top:362.70px;font-size:7.2px;font-weight:400;color:#3a3a3a;transform:scale(1.0000,1.15);transform-origin:100% 50%;">(9,079,750)</div>
<div class="t" style="right:312.80px;top:377.90px;font-size:7.2px;font-weight:400;color:#7b96cf;transform:scale(1.0000,1.15);transform-origin:100% 50%;">3,514,469,704</div>
<div class="t" style="right:312.80px;top:390.10px;font-size:7.4px;font-weight:700;color:#111;transform:scale(1.0000,1.15);transform-origin:100% 50%;">3,547,366,780</div>
<div class="t" style="right:250.80px;top:331.60px;font-size:7.2px;font-weight:400;color:#3a3a3a;transform:scale(1.0000,1.15);transform-origin:100% 50%;">34,865,882</div>
<div class="t" style="right:250.80px;top:346.70px;font-size:7.2px;font-weight:400;color:#3a3a3a;transform:scale(1.0000,1.15);transform-origin:100% 50%;">7,081,328</div>
<div class="t" style="right:248.60px;top:362.70px;font-size:7.2px;font-weight:400;color:#3a3a3a;transform:scale(1.0000,1.15);transform-origin:100% 50%;">(9,079,750)</div>
<div class="t" style="right:250.80px;top:377.90px;font-size:7.2px;font-weight:400;color:#7b96cf;transform:scale(1.0000,1.15);transform-origin:100% 50%;">3,880,839,756</div>
<div class="t" style="right:250.80px;top:390.10px;font-size:7.4px;font-weight:700;color:#111;transform:scale(1.0000,1.15);transform-origin:100% 50%;">3,913,707,215</div>
<div class="t" style="right:190.30px;top:331.60px;font-size:7.2px;font-weight:400;color:#3a3a3a;transform:scale(1.0000,1.15);transform-origin:100% 50%;">34,950,245</div>
<div class="t" style="right:190.30px;top:346.70px;font-size:7.2px;font-weight:400;color:#3a3a3a;transform:scale(1.0000,1.15);transform-origin:100% 50%;">7,062,864</div>
<div class="t" style="right:188.10px;top:362.70px;font-size:7.2px;font-weight:400;color:#3a3a3a;transform:scale(1.0000,1.15);transform-origin:100% 50%;">(8,901,450)</div>
<div class="t" style="right:190.30px;top:377.90px;font-size:7.2px;font-weight:400;color:#7b96cf;transform:scale(1.0000,1.15);transform-origin:100% 50%;">3,089,262,940</div>
<div class="t" style="right:190.30px;top:390.10px;font-size:7.4px;font-weight:700;color:#111;transform:scale(1.0000,1.15);transform-origin:100% 50%;">3,122,374,599</div>
<div class="t" style="left:31.00px;top:451.20px;font-size:7.5px;font-weight:700;color:#fff;transform:scale(1.0000,1.15);transform-origin:0 50%;">Discounted Cash Flow Schedule</div>
<div class="t" style="right:492.50px;top:451.20px;font-size:8.4px;font-weight:700;color:#fff;">2029</div>
<div class="t" style="right:433.00px;top:451.20px;font-size:8.4px;font-weight:700;color:#fff;">2030</div>
<div class="t" style="right:373.00px;top:451.20px;font-size:8.4px;font-weight:700;color:#fff;">2031</div>
<div class="t" style="right:311.00px;top:451.20px;font-size:8.4px;font-weight:700;color:#fff;">2032</div>
<div class="t" style="right:249.00px;top:451.20px;font-size:8.4px;font-weight:700;color:#fff;">2033</div>
<div class="t" style="right:187.20px;top:451.20px;font-size:8.3px;font-weight:700;color:#fff;transform:scale(1.0000,1.05);transform-origin:100% 50%;">Term Avg</div>
<div class="t" style="right:494.30px;top:493.40px;font-size:7.3px;font-weight:400;color:#3a3a3a;transform:scale(1.0000,1.15);transform-origin:100% 50%;">2,227,222,913</div>
<div class="t" style="right:434.80px;top:493.40px;font-size:7.3px;font-weight:400;color:#3a3a3a;transform:scale(1.0000,1.15);transform-origin:100% 50%;">2,758,372,674</div>
<div class="t" style="right:374.80px;top:493.40px;font-size:7.3px;font-weight:400;color:#3a3a3a;transform:scale(1.0000,1.15);transform-origin:100% 50%;">3,162,612,245</div>
<div class="t" style="right:312.80px;top:493.40px;font-size:7.3px;font-weight:400;color:#3a3a3a;transform:scale(1.0000,1.15);transform-origin:100% 50%;">3,547,366,780</div>
<div class="t" style="right:250.80px;top:493.40px;font-size:7.3px;font-weight:400;color:#3a3a3a;transform:scale(1.0000,1.15);transform-origin:100% 50%;">3,913,707,215</div>
<div class="t" style="right:190.30px;top:493.40px;font-size:7.3px;font-weight:400;color:#3a3a3a;transform:scale(1.0000,1.15);transform-origin:100% 50%;">3,122,374,599</div>
<div class="t" style="left:85.00px;top:538.30px;font-size:7.1px;font-weight:700;color:#000;transform:scale(1.0000,1.15);transform-origin:0 50%;">ASSUMPTIONS</div>
<div class="t" style="left:452.00px;top:538.30px;font-size:7.0px;font-weight:700;color:#000;transform:scale(1.0000,1.15);transform-origin:0 50%;">CASH FLOW PROFILES</div>
<div class="t" style="left:90.00px;top:553.60px;font-size:7.6px;font-weight:400;color:#3a3a3a;transform:scale(1.0107,1.15);transform-origin:0 50%;">First Year of Forecast</div>
<div class="t" style="left:53.40px;width:400px;text-align:center;top:553.60px;font-size:7.2px;font-weight:400;color:#3a3a3a;transform:scale(1.0000,1.15);transform-origin:50% 50%;">2028</div>
<div class="t" style="left:354.30px;top:553.60px;font-size:7.6px;font-weight:400;color:#3a3a3a;transform:scale(1.0025,1.15);transform-origin:0 50%;">Discrete Forecast</div>
<div class="t" style="right:494.30px;top:553.60px;font-size:7.3px;font-weight:400;color:#3a3a3a;transform:scale(1.0000,1.15);transform-origin:100% 50%;">2,227,222,913</div>
<div class="t" style="right:434.80px;top:553.60px;font-size:7.3px;font-weight:400;color:#3a3a3a;transform:scale(1.0000,1.15);transform-origin:100% 50%;">2,758,372,674</div>
<div class="t" style="right:374.80px;top:553.60px;font-size:7.3px;font-weight:400;color:#3a3a3a;transform:scale(1.0000,1.15);transform-origin:100% 50%;">3,162,612,245</div>
<div class="t" style="right:312.80px;top:553.60px;font-size:7.3px;font-weight:400;color:#3a3a3a;transform:scale(1.0000,1.15);transform-origin:100% 50%;">3,547,366,780</div>
<div class="t" style="right:250.80px;top:553.60px;font-size:7.3px;font-weight:400;color:#3a3a3a;transform:scale(1.0000,1.15);transform-origin:100% 50%;">3,913,707,215</div>

<!-- vertical scrollbar -->
<div class="a" style="left:987.5px;top:48px;width:12.5px;height:511px;background:#f9f9f9"></div>
<div class="a" style="left:987.5px;top:48px;width:1px;height:511px;background:#e3e3e3"></div>
<svg class="a" style="left:990px;top:53px" width="8" height="6" viewBox="0 0 8 6"><path d="M4 0.5L7.5 5.5H0.5Z" fill="#6a6a6a"/></svg>
<div class="a" style="left:990.8px;top:62.3px;width:6px;height:196px;background:#6e6e6e;border-radius:3px"></div>
<svg class="a" style="left:990px;top:551.5px" width="8" height="6" viewBox="0 0 8 6"><path d="M0.5 0.5H7.5L4 5.5Z" fill="#6a6a6a"/></svg>

<!-- sheet tabs -->
<div class="a" style="left:0;top:559px;width:1000px;height:20px;background:#e8e9ed"></div>
<svg class="a" style="left:15px;top:564px" width="8" height="10" viewBox="0 0 8 10"><path d="M4.8 2L2 5L4.8 8" fill="none" stroke="#777" stroke-width="1.1"/></svg>
<svg class="a" style="left:35px;top:564px" width="8" height="10" viewBox="0 0 8 10"><path d="M3 2L5.8 5L3 8" fill="none" stroke="#777" stroke-width="1.1"/></svg>
<svg class="a" style="left:56px;top:567.5px" width="9" height="3" viewBox="0 0 9 3"><circle cx="1.2" cy="1.5" r="0.9" fill="#444"/><circle cx="4.5" cy="1.5" r="0.9" fill="#444"/><circle cx="7.8" cy="1.5" r="0.9" fill="#444"/></svg>
<div class="a" style="left:72.8px;top:559.8px;width:61.7px;height:16px;background:#f8f494"></div>
<div class="t" style="left:79.5px;top:562.8px;font-size:8.6px;color:#34341c;transform:scale(0.9610,1.22);transform-origin:0 50%">CAPEX 2045</div>
<div class="a" style="left:140px;top:559.8px;width:56px;height:16px;background:#f8f494"></div>
<div class="t" style="left:146.5px;top:562.8px;font-size:8.6px;color:#34341c;transform:scale(0.9577,1.22);transform-origin:0 50%">OPEX 2045</div>
<div class="t" style="left:208px;top:562.8px;font-size:8.6px;color:#3a3a3a;transform:scale(1.0325,1.22);transform-origin:0 50%">Key Metrics Charts</div>
<div class="t" style="left:301px;top:562.8px;font-size:8.6px;color:#3a3a3a;transform:scale(1.0066,1.22);transform-origin:0 50%">Sales Summary Charts</div>
<div class="t" style="left:408px;top:562.8px;font-size:8.6px;color:#3a3a3a;transform:scale(0.9860,1.22);transform-origin:0 50%">KPI Charts</div>
<div class="t" style="left:465px;top:562.8px;font-size:8.6px;color:#3a3a3a;transform:scale(0.9298,1.22);transform-origin:0 50%">BEA</div>
<div class="a" style="left:492.5px;top:559.8px;width:48.5px;height:16px;background:#f8f494"></div>
<div class="t" style="left:499px;top:562.8px;font-size:8.6px;color:#34341c;transform:scale(0.9532,1.22);transform-origin:0 50%">Expenses</div>
<div class="a" style="left:546px;top:559.8px;width:91.5px;height:16px;background:#f8f494"></div>
<div class="t" style="left:553px;top:562.8px;font-size:8.6px;color:#34341c;transform:scale(1.0200,1.22);transform-origin:0 50%">COGS Assumptions</div>
<div class="a" style="left:642.5px;top:559.8px;width:97.5px;height:16px;background:#f8f494"></div>
<div class="t" style="left:649px;top:562.8px;font-size:8.6px;color:#34341c;transform:scale(1.0217,1.22);transform-origin:0 50%">Salaries Assumptions</div>
<div class="a" style="left:744px;top:559px;width:58.5px;height:19px;background:#fff"></div>
<div class="t" style="left:751px;top:561.6px;font-size:8.5px;color:#1f3d2a;font-weight:700;transform:scaleY(1.18)">DCF Model</div>
<div class="a" style="left:751px;top:573.2px;width:46px;height:1.2px;background:#107c41"></div>
<div class="t" style="left:813px;top:562.8px;font-size:8.6px;color:#383838;transform:scaleY(1.22)">CAPS Table</div>
<div class="t" style="left:875.5px;top:563.5px;font-size:8.6px;color:#383838;transform:scaleY(1.12)">(</div>
<svg class="a" style="left:886px;top:568px" width="9" height="3" viewBox="0 0 9 3"><circle cx="1.2" cy="1.5" r="0.9" fill="#444"/><circle cx="4.5" cy="1.5" r="0.9" fill="#444"/><circle cx="7.8" cy="1.5" r="0.9" fill="#444"/></svg>
<svg class="a" style="left:906.5px;top:564.5px" width="9" height="9" viewBox="0 0 9 9"><path d="M4.5 0.5V8.5M0.5 4.5H8.5" stroke="#444" stroke-width="1"/></svg>
<svg class="a" style="left:930.5px;top:563.5px" width="3" height="11" viewBox="0 0 3 11"><circle cx="1.5" cy="1.5" r="0.9" fill="#555"/><circle cx="1.5" cy="5.5" r="0.9" fill="#555"/><circle cx="1.5" cy="9.5" r="0.9" fill="#555"/></svg>
<div class="a" style="left:944px;top:561.4px;width:42.4px;height:12.8px;background:#fafafc;border-radius:6px"></div>
<svg class="a" style="left:945.5px;top:565.5px" width="6" height="7" viewBox="0 0 6 7"><path d="M5 0.5V6.5L0.5 3.5Z" fill="#555"/></svg>
<div class="a" style="left:953.7px;top:565.6px;width:22.3px;height:5.4px;background:#6a6a6a;border-radius:2.7px"></div>
<svg class="a" style="left:979.5px;top:565.5px" width="6" height="7" viewBox="0 0 6 7"><path d="M1 0.5V6.5L5.5 3.5Z" fill="#555"/></svg>

<!-- status bar -->
<div class="a" style="left:0;top:579px;width:1000px;height:12px;background:#f3f3f3"></div>
<div class="t" style="left:8px;top:580.5px;font-size:6.4px;color:#444;transform:scaleY(1.25)">Ready</div>
<svg class="a" style="left:39.5px;top:582.5px" width="10" height="9" viewBox="0 0 10 9">
 <rect x="0.6" y="0.6" width="8.8" height="8.4" fill="#cfcfcf" stroke="#6a6a6a" stroke-width="1.1"/>
 <rect x="0.6" y="0.6" width="8.8" height="2.2" fill="#6a6a6a"/>
 <path d="M3 3V9M6.5 3V9" stroke="#8a8a8a" stroke-width="0.7"/>
 <circle cx="6" cy="6.2" r="1.3" fill="#222"/>
</svg>
<svg class="a" style="left:60px;top:582px" width="10" height="9" viewBox="0 0 10 9">
 <circle cx="4" cy="1.3" r="1.1" fill="#666"/>
 <path d="M0.5 2.8H7.5M4 2.8V5.2L2 8.8M4 5.2L5.6 8.2" fill="none" stroke="#666" stroke-width="1"/>
 <circle cx="7.6" cy="6.8" r="1.6" fill="none" stroke="#333" stroke-width="0.8"/>
</svg>
<div class="t" style="left:72px;top:580.5px;font-size:6.6px;color:#222;font-weight:700;transform:scaleY(1.25)">Accessibility: Investigate</div>
<div class="a" style="left:812px;top:579.5px;width:20px;height:11.5px;background:#e8e8e8"></div>
<svg class="a" style="left:817.5px;top:582.5px" width="10" height="9" viewBox="0 0 10 9"><rect x="0.5" y="0.5" width="9" height="8.5" fill="none" stroke="#555" stroke-width="0.9"/><path d="M0.5 3.3H9.5M0.5 6.1H9.5M3.5 0.5V9M6.5 0.5V9" stroke="#555" stroke-width="0.8"/></svg>
<svg class="a" style="left:844px;top:582.5px" width="11" height="9" viewBox="0 0 11 9"><rect x="0.5" y="0.5" width="10" height="8.5" fill="#8a8a8a" stroke="#555" stroke-width="0.9"/><path d="M3.5 0.5V9M7.5 0.5V9" stroke="#666" stroke-width="0.8"/></svg>
<svg class="a" style="left:870px;top:582.5px" width="10" height="9" viewBox="0 0 10 9"><path d="M0.5 9V0.5H9.5V9M0.5 4.5H6V0.5" fill="none" stroke="#555" stroke-width="0.9"/><path d="M6 4.5V9" stroke="#555" stroke-width="0.8"/></svg>
<div class="a" style="left:892px;top:585.5px;width:4px;height:1px;background:#555"></div>
<div class="a" style="left:898.6px;top:585.5px;width:69px;height:1px;background:#a0a0a0"></div>
<div class="a" style="left:925.6px;top:582.5px;width:2.4px;height:8.5px;background:#555"></div>
<div class="a" style="left:930px;top:584px;width:0.8px;height:3.5px;background:#888"></div>
<svg class="a" style="left:967.5px;top:582.5px" width="7" height="7" viewBox="0 0 7 7"><path d="M3.5 0.5V6.5M0.5 3.5H6.5" stroke="#555" stroke-width="0.9"/></svg>
<div class="t" style="left:981.4px;top:581.2px;font-size:6.2px;color:#555;transform:scaleY(1.2)">81%</div>
</body></html>
